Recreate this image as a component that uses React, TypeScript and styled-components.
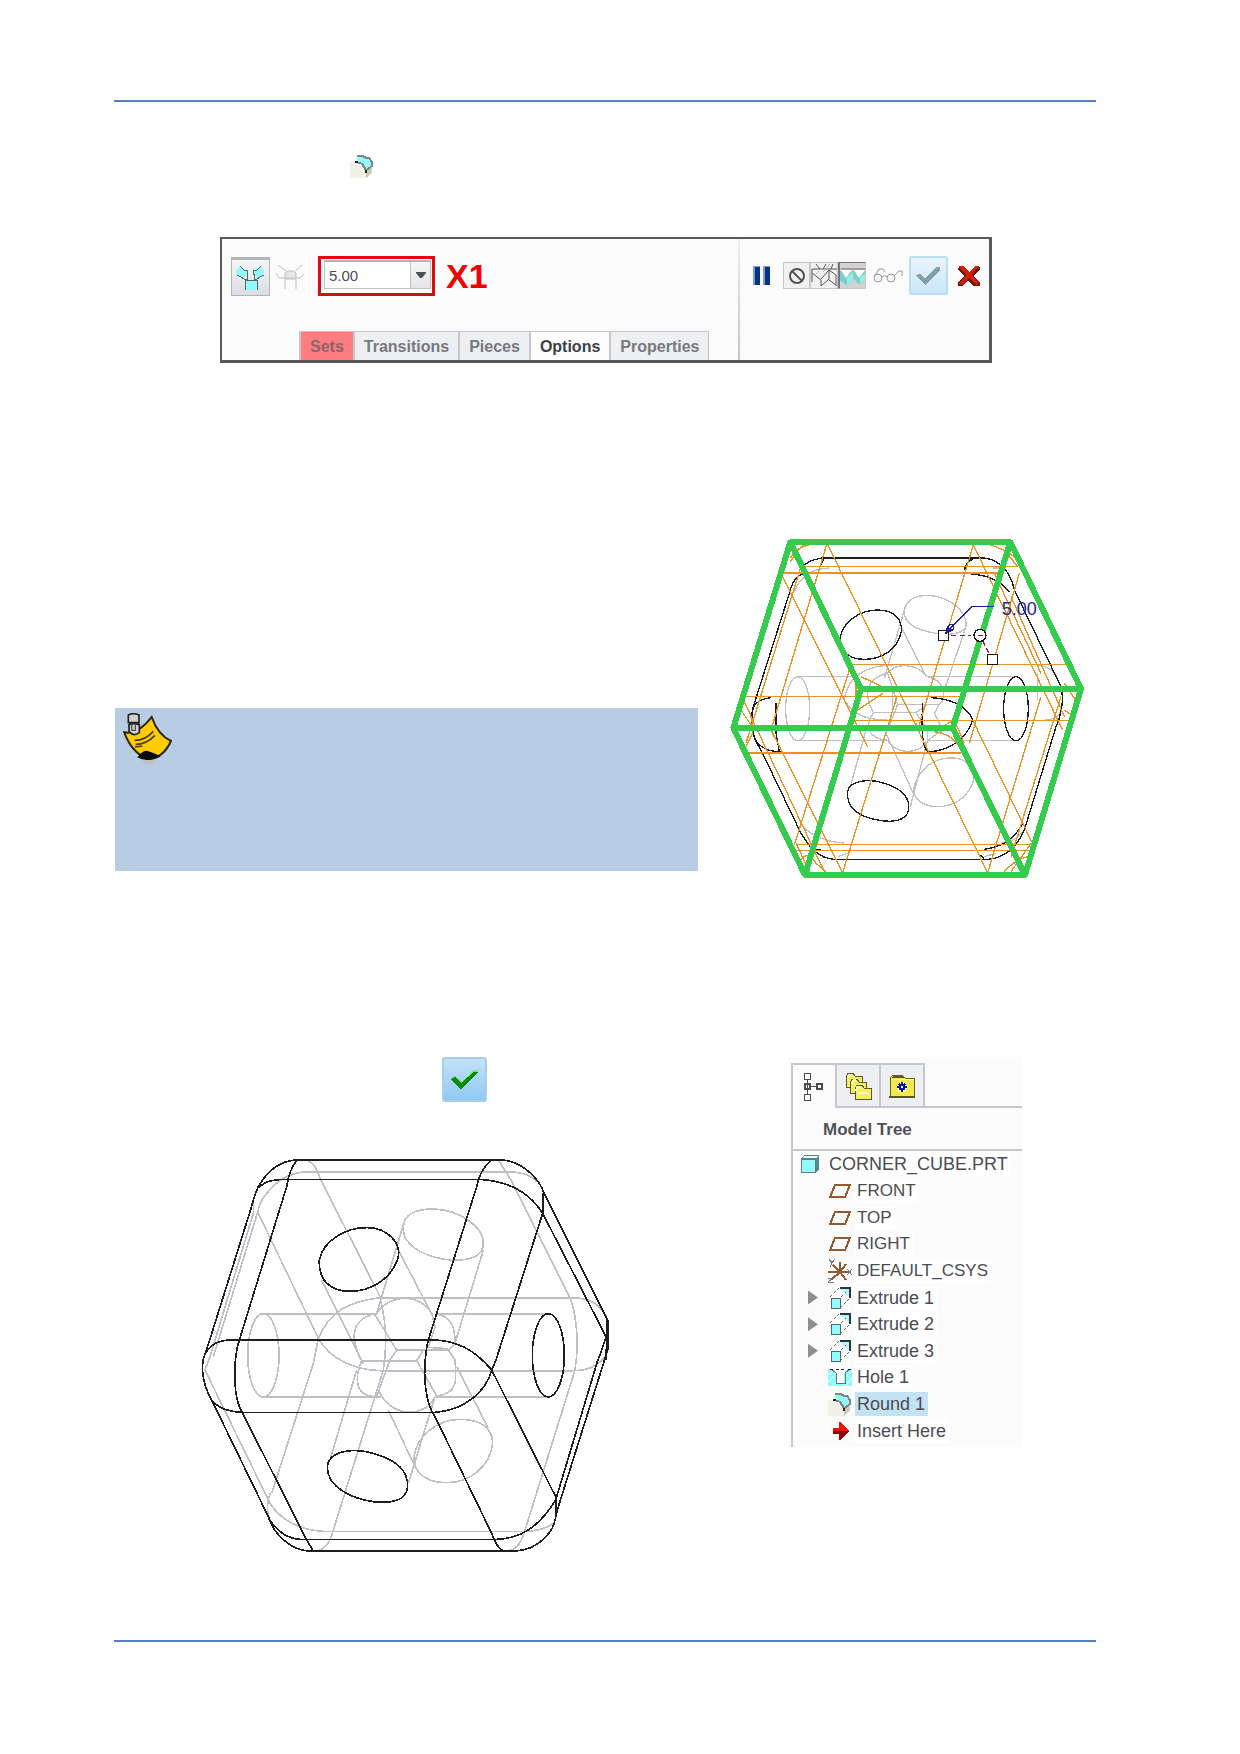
import React from "react";
import styled, { createGlobalStyle } from "styled-components";

const Global = createGlobalStyle`
  *, *::before, *::after { box-sizing: border-box; }
  body { margin: 0; background: #fff; font-family: "Liberation Sans", Arial, sans-serif; }
  button { font: inherit; padding: 0; margin: 0; cursor: pointer; }
  svg { display: block; flex: none; }
`;

const Page = styled.main`
  padding: 100px 144px 112px 114px;
`;
const Rule = styled.hr`
  height: 2px;
  margin: 0;
  border: 0;
  background: #5582bd;
`;
const InlineFigure = styled.p`
  margin: 52px 0 0 236px;
`;

/* Dashboard */
const Dashboard = styled.section`
  display: flex;
  max-width: 772px;
  height: 126px;
  margin: 59px auto 0 106px;
  border: 2px solid #595959;
  border-bottom-width: 3px;
  border-right-width: 3px;
  background: #fbfbfb;
`;
const LeftPane = styled.div`
  flex: 1;
  display: flex;
  flex-direction: column;
  justify-content: space-between;
  padding-top: 17px;
`;
const Divider = styled.div`
  width: 2px;
  background: linear-gradient(#eeeeee, #c4c4c6);
`;
const ToolRow = styled.div`
  display: flex;
  align-items: center;
  height: 40px;
  padding-left: 9px;
`;
const ToolButton = styled.button<{ $pressed?: boolean }>`
  display: grid;
  place-items: center;
  width: ${(p) => (p.$pressed ? 39 : 28)}px;
  height: 39px;
  border: ${(p) => (p.$pressed ? "1px solid #b4b5b8" : "0")};
  border-top-width: ${(p) => (p.$pressed ? "3px" : "0")};
  background: ${(p) => (p.$pressed ? "linear-gradient(#f4f5f6, #dcdee2)" : "none")};
  margin-right: ${(p) => (p.$pressed ? 6 : 14)}px;
`;
const Highlight = styled.div`
  width: 117px;
  height: 40px;
  padding: 1px 1px 4px 3px;
  border: 3px solid #dd0a0e;
`;
const Combo = styled.div`
  display: flex;
  height: 29px;
  border: 1px solid #c2c3c7;
  border-top: 2px solid #b4b4b8;
  background: #fff;
`;
const ComboInput = styled.input`
  flex: 1;
  min-width: 0;
  padding: 0 4px;
  border: 0;
  background: transparent;
  color: #4c4c54;
  font: 15px "Liberation Sans", Arial, sans-serif;
`;
const ComboArrow = styled.button`
  display: grid;
  place-items: center;
  width: 20px;
  border: 0;
  border-left: 1px solid #c2c3c7;
  background: linear-gradient(#f6f6f7, #e4e5e9);
`;
const Marker = styled.strong`
  margin-left: 11px;
  color: #f50000;
  font-size: 34px;
  line-height: 40px;
`;
const Tabs = styled.div`
  display: flex;
  height: 29px;
  margin-left: 77px;
`;
const Tab = styled.button<{ $tone?: "red" | "active" }>`
  padding: 2px 9px 0;
  border: 0 solid #c6c7cb;
  border-width: 1px 0 0 2px;
  background: ${(p) => (p.$tone === "red" ? "#ff7c80" : p.$tone === "active" ? "#fdfdfd" : "#edeff2")};
  color: ${(p) => (p.$tone === "red" ? "#8d646c" : p.$tone === "active" ? "#3c3f48" : "#777980")};
  font-size: 16px;
  font-weight: bold;
  &:last-child { border-right-width: 1px; }
`;
const RightPane = styled.div`
  display: flex;
  align-items: center;
  width: 249px;
  height: 39px;
  margin-top: 17px;
  padding-left: 13px;
`;
const IconButton = styled.button<{ $before?: number; $after?: number }>`
  margin-left: ${(p) => p.$before ?? 0}px;
  margin-right: ${(p) => p.$after ?? 0}px;
  border: 0;
  background: none;
`;
const Group = styled.div`
  display: flex;
  width: 83px;
  height: 27px;
  margin-right: 7px;
`;
const GroupButton = styled.button<{ $on?: boolean }>`
  flex: 1;
  display: grid;
  place-items: center;
  border: 1px solid #c6c6c8;
  border-left: ${(p) => (p.$on ? "2px solid #77777b" : "1px solid #c6c6c8")};
  border-top-color: ${(p) => (p.$on ? "#77777b" : "#c6c6c8")};
  background: ${(p) => (p.$on ? "#d3d3d5" : "#f1f1f2")};
  overflow: hidden;
`;
const AcceptButton = styled.button<{ $large?: boolean }>`
  display: grid;
  place-items: center;
  width: ${(p) => (p.$large ? 45 : 39)}px;
  height: ${(p) => (p.$large ? 45 : 39)}px;
  border: 2px solid ${(p) => (p.$large ? "#a5cfec" : "#b9dff1")};
  border-radius: 3px;
  background: ${(p) => (p.$large ? "linear-gradient(#c3e2f9, #8fc9f2)" : "linear-gradient(#e7f4fc, #cbe7f8)")};
`;

/* Body rows */
const NoteRow = styled.div`
  display: flex;
  gap: 23px;
  margin-top: 167px;
  padding: 0 5px 0 1px;
`;
const Note = styled.aside`
  flex: 1;
  height: 163px;
  margin-top: 178px;
  padding: 5px 8px;
  background: #b8cce4;
`;
const ResultRow = styled.div`
  display: flex;
  justify-content: space-between;
  align-items: flex-start;
  margin: 167px 74px 80px 76px;
`;
const ResultColumn = styled.div`
  display: flex;
  flex-direction: column;
  gap: 48px;
  & > button { margin-left: 252px; }
`;

/* Model tree */
const TreePanel = styled.section`
  width: 234px;
  height: 390px;
  padding: 6px 0 0 3px;
  background: #fbfbfb;
`;
const TreeFrame = styled.div`
  height: 384px;
  border-left: 2px solid #c6c7cd;
`;
const TreeTabs = styled.div`
  display: flex;
  height: 45px;
  &::after { content: ""; flex: 1; border-bottom: 2px solid #c6c7cd; }
`;
const TreeTab = styled.button<{ $active?: boolean }>`
  display: grid;
  place-items: center;
  width: 44px;
  border: 0 solid #c6c7cd;
  border-width: 2px 2px ${(p) => (p.$active ? 0 : 2)}px 0;
  background: ${(p) => (p.$active ? "#fbfbfb" : "#eeeff2")};
`;
const TreeTitle = styled.h2`
  height: 43px;
  margin: 0;
  padding-left: 30px;
  border-bottom: 2px solid #c6c7cd;
  color: #50525b;
  font-size: 17px;
  line-height: 43px;
`;
const TreeList = styled.ul`
  display: flex;
  flex-direction: column;
  height: 293px;
  margin: 0;
  padding: 0;
  list-style: none;
`;
const TreeItem = styled.li<{ $root?: boolean }>`
  flex: 1;
  display: grid;
  grid-template-columns: ${(p) => (p.$root ? "0 24px 1fr" : "28px 24px 1fr")};
  column-gap: 3px;
  align-items: center;
  padding-left: 4px;
`;
const Expander = styled.button`
  width: 10px;
  height: 14px;
  margin-left: 11px;
  border: 0;
  background: #8d8d92;
  clip-path: polygon(0 0, 100% 50%, 0 100%);
`;
const Label = styled.span<{ $selected?: boolean; $datum?: boolean }>`
  justify-self: start;
  padding: 0 3px 0 2px;
  background: ${(p) => (p.$selected ? "#c3e2f3" : "#fff")};
  color: #4b4b54;
  font-size: ${(p) => (p.$datum ? 17 : 18)}px;
  line-height: 24px;
  white-space: nowrap;
`;

const RoundIcon = () => (
  <svg width="24" height="24" viewBox="0 0 24 24" shapeRendering="crispEdges" aria-hidden="true">
    <path d="M0 8h7l9 8v8H0z" fill="#f2f1e8" />
    <path d="M16 17l6-6v7l-5 6h-1z" fill="#cfcbb6" />
    <path d="M7 5l2-3h5l5 3 3 5-5 6-3-4-7-4z" fill="#92fbfb" />
    <path d="M7 2h6l3 2h3l3 4v5M7 8l5 2 4 6 5-3" fill="none" stroke="#7b8687" strokeWidth="2" />
    <path d="M5 8h3M16 16v3" stroke="#222" strokeWidth="2" />
  </svg>
);

const ConicIcon = ({ muted }: { muted?: boolean }) =>
  muted ? (
    <svg width="28" height="25" viewBox="0 0 28 25" stroke="#bdbdbf" aria-hidden="true">
      <path d="M9 14V9l3-2h5l3 2v5z" fill="#e6e6e7" />
      <path d="M9 25V15h11v10M2 1l8 6M26 1l-7 6M0 9l3 5h6M28 10l-4 4h-4" fill="none" />
    </svg>
  ) : (
    <svg width="29" height="25" viewBox="0 0 29 25" shapeRendering="crispEdges" aria-hidden="true">
      <path d="M9 15h12v10H9zM4 1L0 6l1 5 6 2 4-3V6zM25 1l3 5-1 5-5 2-4-3V6z" fill="#92fbfb" />
      <path d="M9 25V15h12v10M4 1l4 4h3l1 5M1 10l4 2 3 2h3V9M25 1l-4 4h-3l-1 5M28 10l-4 2-3 2h-3V9" fill="none" stroke="#52696d" />
    </svg>
  );

const GreenTick = ({ muted }: { muted?: boolean }) => (
  <svg width="27" height="20" viewBox="0 0 27 20" shapeRendering="crispEdges" aria-hidden="true">
    {!muted && <path d="M0 7l4-1 6 6L23 0h4v3L10 16z" fill="#76e879" />}
    <path d={muted ? "M1 9l4-1 5 5L21 1h4v3L10 19z" : "M0 9l4-2 6 6L23 2h4L10 20z"} fill={muted ? "#819eae" : "#078b0c"} />
  </svg>
);

const NoteIcon = () => (
  <svg width="49" height="51" viewBox="0 0 147 153" aria-hidden="true">
    <path d="M52 138h50l-12 14H67z" fill="#bfc0c2" />
    <path d="M4 58Q45 66 86 12Q105 66 144 84Q119 138 73 138Q24 116 4 58z" fill="#fc0" stroke="#292415" strokeWidth="6" />
    <path d="M43 133Q60 110 73 114Q100 122 113 130Q72 151 43 133z" fill="#090909" />
    <path d="M35 82Q67 82 91 55M38 94Q70 94 96 67M36 102L58 99" fill="none" stroke="#4a3e05" strokeWidth="5" />
    <path d="M16 6Q31-2 48 6V29H16zM18 35Q32 29 49 35V59Q32 72 18 56z" fill="#d0d0d1" stroke="#222" strokeWidth="5" />
    <path d="M26 36V52H37V34" fill="none" stroke="#555" strokeWidth="4" />
  </svg>
);

const grey = "#c0bfc8";
const ink = "#1d1c20";
const orange = "#e89321";

const SelectedEdgesCube = () => (
  <svg width="370" height="360" viewBox="0 0 1110 1080" fill="none" shapeRendering="crispEdges" role="img" aria-label="Cube with selected edges and radius handle">
    <g stroke={grey} strokeWidth="4">
      <ellipse cx="230" cy="536" rx="36" ry="96" />
      <path d="M225 440H400M620 440H885M225 631H500M620 631H885" />
      <path d="M550 250C550 200 600 190 650 200C710 215 740 260 735 290C720 320 660 315 620 305C580 295 552 280 550 250z" />
      <path d="M577 780C590 710 650 680 700 684C750 690 765 730 755 760C735 810 690 830 650 830C610 830 580 810 577 780z" />
      <path d="M550 240L490 445M540 290L615 440M735 290L670 480M435 600L388 770M495 610L577 790M620 630L568 830" />
      <path d="M500 430C520 400 580 395 620 440M500 430C430 445 430 500 457 548H585L620 523H530L500 430M620 440C670 450 680 500 655 523L640 550L665 600L620 631M457 548C430 590 440 625 500 631C520 670 590 680 620 631M655 523H620M585 548L620 600V631M530 523L500 600" />
      <path d="M370 510C380 430 450 405 520 405M370 510C400 560 440 570 510 571M515 480V540M945 404C985 410 1005 425 1010 450M950 430V510M965 571C1000 570 1015 560 1020 540" />
      <path d="M220 185C240 135 280 115 325 114M815 114H850M240 885C275 920 315 937 370 939M840 939C870 939 900 920 915 890M350 980L380 970M790 980L825 970" />
    </g>
    <g stroke={ink} strokeWidth="4">
      <path d="M300 84H790" strokeWidth="6" />
      <path d="M250 105Q270 87 310 84M790 84C840 90 870 130 880 180L1020 470C1030 510 1020 560 1005 590L910 900C890 950 850 985 800 988H340C290 985 265 950 240 910L120 660C90 620 85 560 100 520L205 190C215 150 230 130 260 130" />
      <path d="M300 105L310 84M730 120Q740 80 780 84M750 132C800 135 840 155 865 185M790 958C850 950 885 920 905 880M770 970L790 985M285 958H300" />
      <path d="M358 320C370 270 420 240 470 240C520 240 545 270 541 305C530 360 480 388 430 388C390 388 358 370 358 320z" />
      <path d="M380 785C385 750 450 745 490 760C540 775 568 800 563 840C555 875 510 878 470 870C410 860 375 830 380 785z" />
      <ellipse cx="885" cy="536" rx="37" ry="96" />
      <path d="M150 503C90 510 90 540 95 600C100 650 140 665 180 665M165 520V610L175 665M605 520C600 600 605 650 620 665C690 665 740 620 755 570C740 530 690 505 630 503" />
    </g>
    <g stroke={orange} strokeWidth="4">
      <path d="M250 109H890M390 404H1045M75 500H715M400 571H1045M225 943H930M225 961H925" strokeWidth="3" />
      <path d="M185 129H830M75 668H720" strokeWidth="6" />
      <path d="M318 40L800 1028M757 45L590 600M757 45L1025 600M318 40L150 600M185 140L440 650M895 130L745 640M390 404L220 945M528 500L365 1028M960 500L800 1028M755 570L932 935M150 600L365 1028M90 560L310 1025M870 200L1030 560M1020 500L870 980M240 110L75 640M820 130L960 430" />
      <path d="M208 85Q220 55 270 42M208 95Q230 60 250 44M800 42Q860 60 885 85M850 60L890 110M60 540L100 600M65 510Q100 560 95 610L75 650M405 450V510M420 440L480 468M410 540L485 490M645 600L700 570L730 640M640 605Q690 610 720 655M585 580V600M1045 420L1075 480M1030 460L1070 520M1030 540L1060 560M240 990Q260 960 285 1000L315 1025M225 940L265 1025M850 1025Q880 990 920 980M870 1025L930 940" />
    </g>
    <g stroke="#35cb4d" strokeWidth="18">
      <path d="M208 36H868L1080 477L912 1035H252L37 594z" strokeLinejoin="bevel" />
      <path d="M208 36L420 477H1080M420 477L252 1035M868 36L695 594H37M695 594L912 1035" />
    </g>
    <path d="M690 316H750M764 316H785M785 332L803 370" stroke="#8c1c2c" strokeWidth="4" strokeDasharray="16 10" />
    <g stroke="#1a1aa3" strokeWidth="4">
      <path d="M818 230H753L672 312" />
      <circle cx="690" cy="292" r="8" />
      <path d="M672 312L680 292L694 300z" fill="#1a1aa3" />
    </g>
    <text x="842" y="254" fill="#23238f" fontFamily="Liberation Sans, Arial, sans-serif" fontSize="54">5.00</text>
    <g stroke="#161616" strokeWidth="4">
      <path d="M653 301H683V331H653zM800 373H830V403H800z" fill="#fff" />
      <path d="M672 312L683 301" stroke="#1a1aa3" strokeWidth="6" />
      <circle cx="777" cy="316" r="18" fill="#fff" />
    </g>
    <path d="M770 316H786" stroke="#8c1c2c" strokeWidth="4" />
  </svg>
);

const RoundedCube = () => (
  <svg width="430" height="410" viewBox="0 0 1290 1230" fill="none" shapeRendering="crispEdges" role="img" aria-label="Cube with rounded edges">
    <g stroke={grey} strokeWidth="5">
      <ellipse cx="220" cy="616" rx="47" ry="125" />
      <path d="M212 492H560M740 492H1075M212 741H572M737 741H1075" />
      <path d="M640 235C640 190 680 177 730 177C810 180 880 230 880 280C880 320 840 331 790 331C710 325 640 290 640 235z" />
      <path d="M672 920C680 860 740 808 810 808C880 808 908 840 908 880C900 950 840 998 770 998C710 998 670 970 672 920z" />
      <path d="M350 30C375 40 380 60 395 95L572 443M925 30L960 85L1140 443M570 443H1150C1200 445 1225 460 1250 500M1140 443C1165 510 1165 600 1155 660L1005 1140C990 1190 975 1200 950 1203" />
      <path d="M570 443C480 455 420 480 385 565L370 640L245 1030M570 443C590 520 590 600 580 660L430 1140C420 1180 400 1200 380 1203" />
      <path d="M205 190L385 565C420 630 500 660 570 662H1150C1200 662 1230 640 1245 620" />
      <path d="M190 150V190L60 620L45 660L240 1060C270 1110 330 1140 400 1144H1010C1050 1142 1080 1130 1095 1115M205 190C200 160 250 90 310 72C330 65 350 65 370 65H950C1000 66 1030 80 1040 95M205 180L70 620M240 1030C230 1060 230 1090 240 1110" />
      <path d="M395 390L520 640M640 225L560 490M625 300L725 492M880 300L795 580M800 650L895 835M595 780L675 950M735 740L655 1000M500 660L420 930" />
      <path d="M560 490C600 430 690 430 725 490M560 490C500 500 490 540 493 570C500 600 505 620 515 632H680L700 600M620 600H775M555 495L620 600L600 630L560 740M740 492C790 500 795 540 795 580L775 600L795 630C800 690 805 730 740 738L680 632M515 632C495 680 490 740 560 740M565 720C600 800 700 810 735 740M725 490L735 530L715 592L775 596" />
    </g>
    <g stroke={ink} strokeWidth="5">
      <path d="M315 30H937M125 570H740M158 787H735M355 1203H975" />
      <path d="M315 30C260 35 225 75 205 110C190 140 190 155 180 185L48 605C30 640 35 700 65 750L235 1100C250 1150 300 1200 355 1203M975 1203C1050 1200 1090 1140 1095 1110L1105 1070L1253 600V510L1062 130C1050 90 1000 35 937 30" />
      <path d="M205 115C225 90 260 88 300 88H865C960 92 1020 130 1058 190V130M1058 190L1248 560C1240 590 1235 600 1222 635L1097 1050C1060 1110 1010 1165 920 1168H330C290 1165 262 1145 240 1110M1058 190L918 630L905 660L1097 1040V1100" />
      <path d="M320 30C300 60 295 80 290 110L148 570C135 610 133 660 135 700C137 740 145 770 158 790L350 1170L370 1203M905 30C880 50 870 70 860 110L715 570C705 610 700 680 708 720C712 750 720 780 735 800L905 1150C915 1180 925 1195 940 1203" />
      <path d="M50 605C65 580 90 570 125 570M740 570C800 575 850 595 905 660C890 720 830 780 735 787M158 787C110 785 80 770 65 750M1252 510L1248 630" />
      <path d="M388 330C400 270 470 232 530 233C590 232 640 280 622 330C600 390 540 424 480 424C420 424 385 390 388 330z" />
      <path d="M412 955C412 900 490 893 550 910C620 930 655 965 653 1010C650 1055 600 1060 550 1055C480 1045 415 1010 412 955z" />
      <ellipse cx="1075" cy="616" rx="48" ry="125" />
    </g>
  </svg>
);

const PartIcon = () => (
  <svg width="20" height="18" viewBox="0 0 20 18" shapeRendering="crispEdges">
    <path d="M1 3l3-3h15v14l-3 4H1z" fill="#54888a" />
    <path d="M2 3l2-2h14l-2 2z" fill="#e9ffff" />
    <path d="M1 4h14v13H1z" fill="#92fbfb" stroke="#6b7778" />
  </svg>
);
const PlaneIcon = () => (
  <svg width="24" height="16" viewBox="0 0 24 16" shapeRendering="crispEdges">
    <path d="M7 2h15l-5 12H2z" fill="none" stroke="#935a31" strokeWidth="2" />
  </svg>
);
const CsysIcon = () => (
  <svg width="24" height="24" viewBox="0 0 24 24" fill="none" shapeRendering="crispEdges">
    <path d="M12 13V3M12 13L5 6M12 13L18 5M12 13H0M12 13H20M12 13L4 20M12 13L18 21" stroke="#935a31" strokeWidth="2" />
    <path d="M1 0l3 4 3-4M4 4L2 8M19 10l5 6M24 10l-5 6M0 19h5l-5 4h6" stroke="#77777a" />
  </svg>
);
const ExtrudeIcon = () => (
  <svg width="24" height="22" viewBox="0 0 24 22" fill="none" shapeRendering="crispEdges">
    <path d="M13 2h8v9l-4-4z" fill="#b8f7f7" />
    <path d="M2 10l9-9M12 21l10-10M13 10l5-5" stroke="#62696b" strokeDasharray="3 2" />
    <path d="M12 1h10v10" stroke="#26383b" strokeWidth="2" />
    <path d="M3 11h9v10H3z" fill="#92fbfb" stroke="#52696d" />
  </svg>
);
const HoleIcon = () => (
  <svg width="24" height="18" viewBox="0 0 24 18" fill="none" shapeRendering="crispEdges">
    <path d="M0 1h5l3 5v9h8V6l3-5h5v17H0z" fill="#92fbfb" />
    <path d="M0 7l5-4M0 14l7-7M4 18l4-4M18 9l6-6M18 17l6-7" stroke="#effefe" />
    <path d="M3 1l5 4v10h9V5l5-4" stroke="#62777a" />
    <path d="M2 1h3M8 1h3M13 1h3M20 1h3" stroke="#222" />
  </svg>
);
const InsertIcon = () => (
  <svg width="24" height="18" viewBox="0 0 24 18" shapeRendering="crispEdges">
    <path d="M5 6h6V0h2l8 9-8 9h-2v-6H5z" fill="#8b0708" />
    <path d="M5 6h6V0h2l8 9H5z" fill="#ee1010" />
  </svg>
);

const ModelTreeTabIcon = () => (
  <svg width="20" height="28" viewBox="0 0 20 28" fill="#4b4b4f" shapeRendering="crispEdges">
    <path d="M3 7h1v15H3zM7 13h6v1H7z" />
    <path fillRule="evenodd" d="M0 0h7v7H0zM1 1v5h5V1zM0 10h7v7H0zM2 12v3h3v-3zM0 21h7v7H0zM1 22v5h5v-5zM12 10h7v7h-7zM14 12v3h3v-3z" />
  </svg>
);
const folder = "M1 5l2-4h5l2 3h7v11H1z";
const FoldersIcon = () => (
  <svg width="27" height="28" viewBox="0 0 27 28" fill="#f5ef65" stroke="#5c5931" strokeWidth="1" shapeRendering="crispEdges">
    <path d={folder} />
    <path d={folder} transform="translate(4 6)" />
    <path d={folder} transform="translate(9 12)" />
    <path d="M11 19l1-4h3M7 12l2-4h2M3 6l1-3h3M13 21h10" stroke="#fffdc1" strokeWidth="2" />
  </svg>
);
const FavouriteIcon = () => (
  <svg width="26" height="24" viewBox="0 0 26 24" shapeRendering="crispEdges">
    <path d="M1 23V4l3-3h9l3 3h9v19z" fill="#f4e94c" stroke="#68632b" />
    <path d="M2 4l2-2h9l2 2zM0 22h26v2H0z" fill="#5c5821" />
    <path d="M2 5h22v1H2z" fill="#fffba0" />
    <circle cx="13" cy="13" r="5" fill="#fff" />
    <path d="M13 8v10M8 13h10M10 10l6 6M16 10l-6 6" stroke="#0b1891" strokeWidth="2" />
    <path d="M12 12h2v2h-2z" fill="#fff" />
  </svg>
);

type Row = { name: string; icon: React.ReactNode; root?: boolean; datum?: boolean; expands?: boolean; selected?: boolean };
const rows: Row[] = [
  { name: "CORNER_CUBE.PRT", icon: <PartIcon />, root: true },
  { name: "FRONT", icon: <PlaneIcon />, datum: true },
  { name: "TOP", icon: <PlaneIcon />, datum: true },
  { name: "RIGHT", icon: <PlaneIcon />, datum: true },
  { name: "DEFAULT_CSYS", icon: <CsysIcon />, datum: true },
  { name: "Extrude 1", icon: <ExtrudeIcon />, expands: true },
  { name: "Extrude 2", icon: <ExtrudeIcon />, expands: true },
  { name: "Extrude 3", icon: <ExtrudeIcon />, expands: true },
  { name: "Hole 1", icon: <HoleIcon /> },
  { name: "Round 1", icon: <RoundIcon />, selected: true },
  { name: "Insert Here", icon: <InsertIcon /> },
];

export default function App() {
  return (
    <>
      <Global />
      <Page>
        <Rule />
        <InlineFigure><RoundIcon /></InlineFigure>

        <Dashboard aria-label="Round dashboard">
          <LeftPane>
            <ToolRow>
              <ToolButton $pressed aria-label="Set mode"><ConicIcon /></ToolButton>
              <ToolButton aria-label="Transition mode"><ConicIcon muted /></ToolButton>
              <Highlight>
                <Combo>
                  <ComboInput aria-label="Radius" defaultValue="5.00" />
                  <ComboArrow aria-label="Recent values">
                    <svg width="10" height="8" viewBox="0 0 10 8"><path d="M0 1h10v1L6 7H4L0 2z" fill="#4d4f59" /></svg>
                  </ComboArrow>
                </Combo>
              </Highlight>
              <Marker>X1</Marker>
            </ToolRow>
            <Tabs>
              <Tab $tone="red">Sets</Tab>
              <Tab>Transitions</Tab>
              <Tab>Pieces</Tab>
              <Tab $tone="active">Options</Tab>
              <Tab>Properties</Tab>
            </Tabs>
          </LeftPane>
          <Divider />
          <RightPane>
            <IconButton $after={12} aria-label="Pause">
              <svg width="18" height="19" viewBox="0 0 18 19" shapeRendering="crispEdges">
                <path d="M0 0h7v19H0zM10 0h7v19h-7z" fill="#7fa0cf" />
                <path d="M2 1h5v18H2zM12 1h5v18h-5z" fill="#06338a" />
              </svg>
            </IconButton>
            <Group>
              <GroupButton aria-label="No preview">
                <svg width="18" height="18" viewBox="0 0 18 18" fill="none" stroke="#525257" strokeWidth="2"><circle cx="9" cy="9" r="7" /><path d="M4 4l10 10" /></svg>
              </GroupButton>
              <GroupButton aria-label="Unattached">
                <svg width="28" height="25" viewBox="0 0 28 25" fill="none" stroke="#57575a">
                  <path d="M1 6v13M1 10l9 7v6M10 23l8-7V7l-8 9M18 7l7 5v11M1 6h26M5 1l4 5M15 1l-3 5M22 1l-2 5M27 6v10M18 17l7 5" />
                  <path d="M5 11l5-5M12 9l7-8" stroke="#c6bfa7" />
                </svg>
              </GroupButton>
              <GroupButton $on aria-label="Attached">
                <svg width="26" height="23" viewBox="0 0 26 23">
                  <path d="M0 7h26v9l-6 5-6-6-7 7-7-6z" fill="#79d1cb" />
                  <path d="M1 6h11l-6 8zM14 6h11l-6 8z" fill="#fff" />
                  <path d="M7 14l6-6v8l-6 6zM20 14l6-6v7l-6 6z" fill="#9de9e4" />
                  <path d="M1 5h24" stroke="#a39a98" strokeWidth="2" />
                </svg>
              </GroupButton>
            </Group>
            <IconButton $after={6} aria-label="Preview">
              <svg width="30" height="16" viewBox="0 0 30 16" fill="#f5f5f5" stroke="#98989a">
                <circle cx="5" cy="10" r="4" /><circle cx="18" cy="10" r="4" />
                <path d="M1 9L6 1h4l2 3M9 9q2-3 5 0M21 8l5-5h3v5" fill="none" />
              </svg>
            </IconButton>
            <AcceptButton aria-label="Accept"><GreenTick muted /></AcceptButton>
            <IconButton $before={10} aria-label="Cancel">
              <svg width="22" height="20" viewBox="0 0 22 20" shapeRendering="crispEdges">
                <path d="M0 2h6l5 5 6-6h5v3l-7 6 7 7v3h-7l-5-6-5 6H0v-4l7-6-7-6z" fill="#74120d" />
                <path d="M0 1l2-1h4l5 6 6-6h4l-7 9 7 8-3 2-7-7-6 7-4-1 7-9z" fill="#cf200c" />
              </svg>
            </IconButton>
          </RightPane>
        </Dashboard>

        <NoteRow>
          <Note aria-label="Note"><NoteIcon /></Note>
          <SelectedEdgesCube />
        </NoteRow>

        <ResultRow>
          <ResultColumn>
            <AcceptButton $large aria-label="Complete feature"><GreenTick /></AcceptButton>
            <RoundedCube />
          </ResultColumn>
          <TreePanel>
            <TreeFrame>
              <TreeTabs>
                <TreeTab $active aria-label="Model tree"><ModelTreeTabIcon /></TreeTab>
                <TreeTab aria-label="Folder browser"><FoldersIcon /></TreeTab>
                <TreeTab aria-label="Favorites"><FavouriteIcon /></TreeTab>
              </TreeTabs>
              <TreeTitle>Model Tree</TreeTitle>
              <TreeList>
                {rows.map((row) => (
                  <TreeItem key={row.name} $root={row.root}>
                    {row.expands ? <Expander aria-label={"Expand " + row.name} /> : <span />}
                    {row.icon}
                    <Label $datum={row.datum} $selected={row.selected}>{row.name}</Label>
                  </TreeItem>
                ))}
              </TreeList>
            </TreeFrame>
          </TreePanel>
        </ResultRow>
        <Rule />
      </Page>
    </>
  );
}
